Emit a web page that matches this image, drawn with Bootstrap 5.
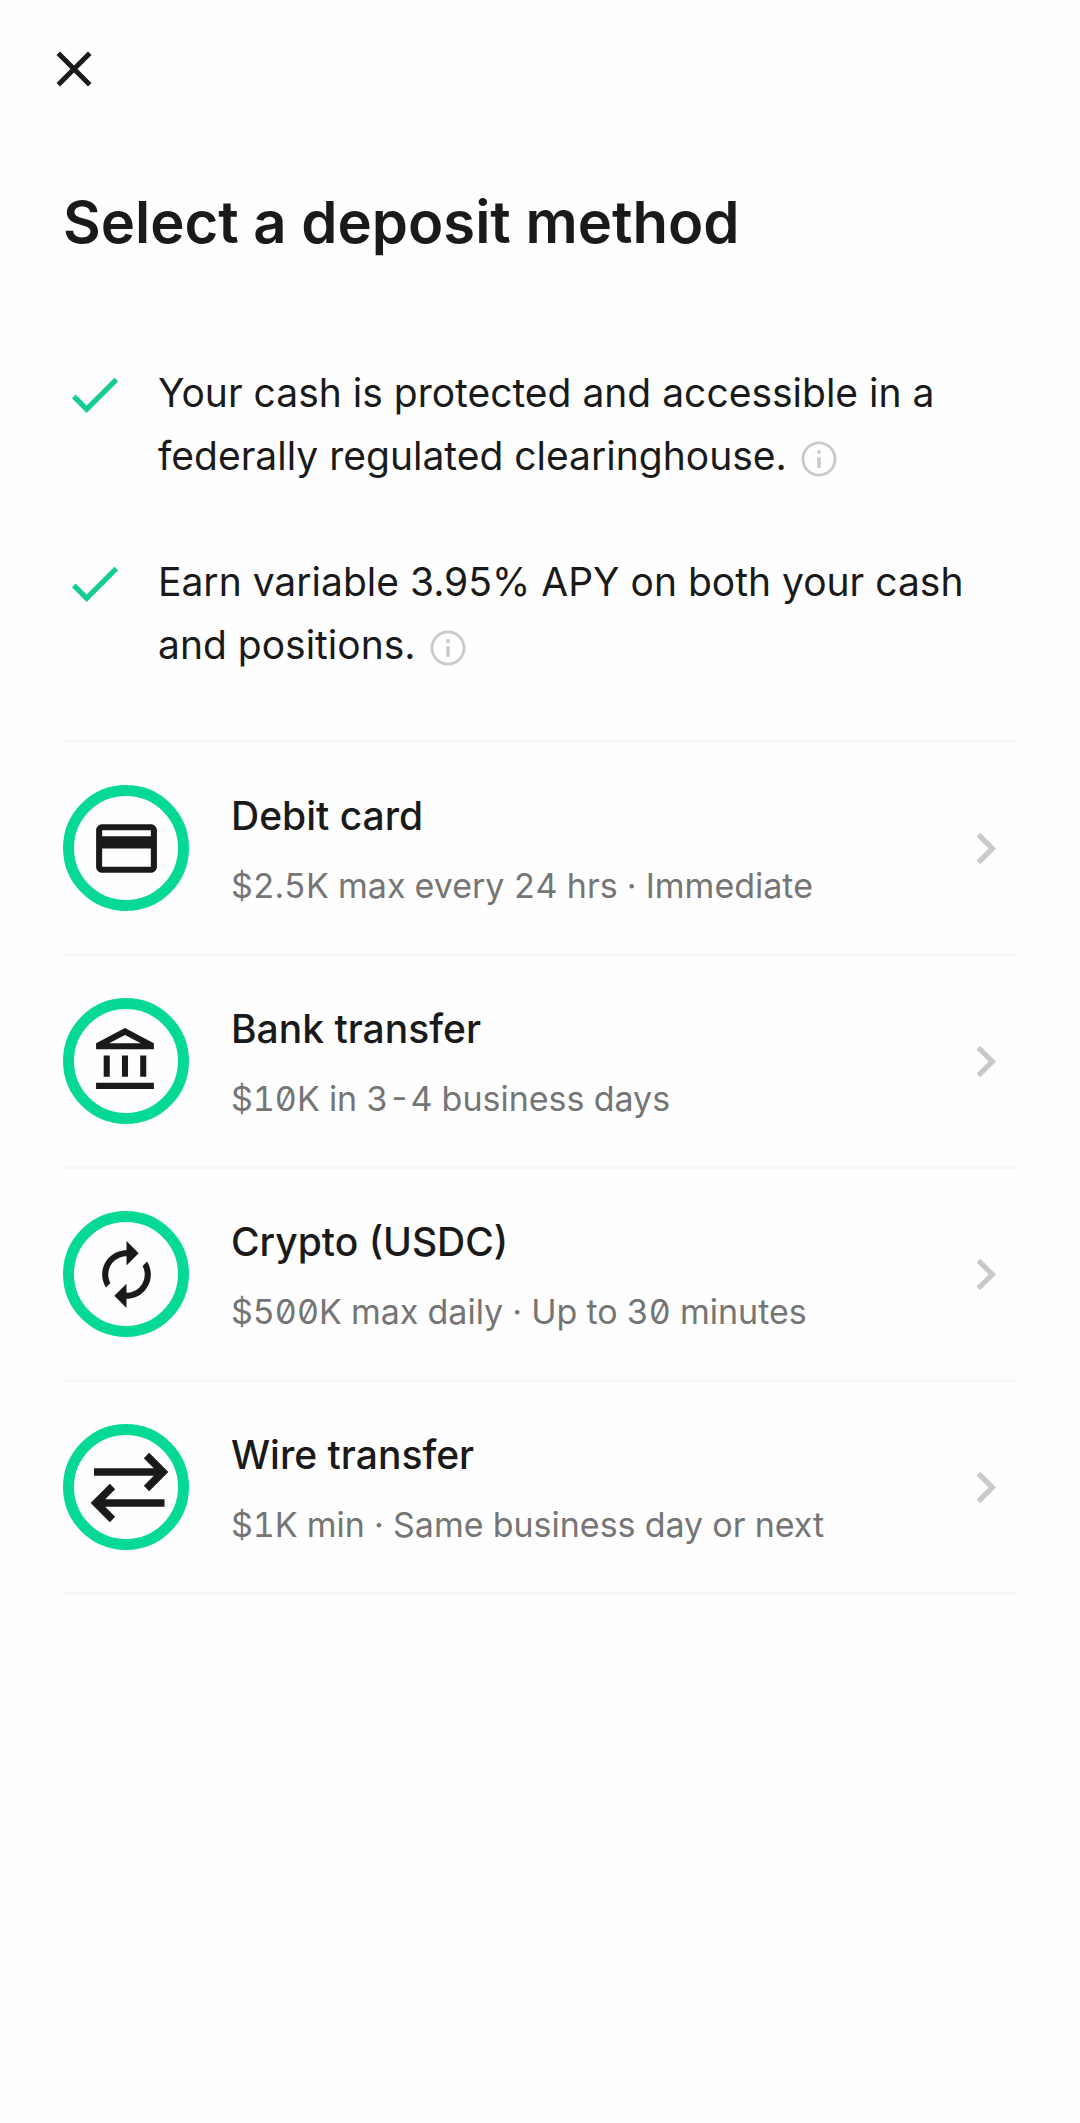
<!DOCTYPE html>
<html lang="en">
<head>
<meta charset="utf-8">
<meta name="viewport" content="width=device-width, initial-scale=1">
<title>Select a deposit method</title>
<link href="https://cdn.jsdelivr.net/npm/bootstrap@5.3.0/dist/css/bootstrap.min.css" rel="stylesheet">
<style>
  :root { --ink: #1a1a1a; --quiet: #757575; --faint: #c9c9c9; --rule: #f7f7f7; --mint: #06d995; }
  body { font-family: Inter, "Liberation Sans", sans-serif; color: var(--ink); background: #fefefe; font-size: 39px; line-height: 63px; }
  svg { display: block; fill: currentColor; }
  .top-bar { padding: 39px 44px 0; }
  .top-bar .btn { color: var(--ink); }
  .sheet { padding: 89px 63px 63px; }
  .sheet-title { font-size: 58px; line-height: 68px; font-weight: 600; margin-bottom: 105px; }
  .perks { gap: 63px; margin-bottom: 64px; }
  .perk { gap: 32px; }
  .perk-tick { color: #14cc91; margin-top: 2px; }
  .info-btn { color: var(--faint); line-height: 0; vertical-align: -10px; }
  .methods { border-top: 3px solid var(--rule); }
  .method { gap: 42px; padding: 42px 0; border-bottom: 3px solid var(--rule); color: var(--ink); }
  .ring { width: 126px; height: 126px; border: 11px solid var(--mint); }
  .method-text { gap: 14px; }
  .method-name { font-weight: 500; line-height: 62px; }
  .method-note { font-size: 34px; line-height: 50px; color: var(--quiet); font-feature-settings: "zero", "tnum"; }
  .method-go { color: var(--faint); }
</style>
<script src="https://cdn.jsdelivr.net/npm/bootstrap@5.3.0/dist/js/bootstrap.bundle.min.js" defer></script>
</head>
<body>
<header class="top-bar d-flex">
  <button type="button" class="btn p-0 border-0" aria-label="Close">
    <svg width="60" height="60" viewBox="0 0 24 24"><path d="M19 6.41 17.59 5 12 10.59 6.41 5 5 6.41 10.59 12 5 17.59 6.41 19 12 13.41 17.59 19 19 17.59 13.41 12z"/></svg>
  </button>
</header>
<main class="sheet">
  <h1 class="sheet-title">Select a deposit method</h1>

  <ul class="perks list-unstyled d-flex flex-column">
    <li class="perk d-flex align-items-start">
      <svg class="perk-tick flex-shrink-0" width="63" height="63" viewBox="0 0 24 24" aria-hidden="true"><path d="M9 16.17 4.83 12l-1.42 1.41L9 19 21 7l-1.41-1.41z"/></svg>
      <div>Your cash is protected and accessible in a federally regulated clearinghouse.
        <button type="button" class="info-btn btn p-0 border-0" aria-label="About cash protection"><svg width="42" height="42" viewBox="0 0 24 24"><path d="M11 7h2v2h-2zm0 4h2v6h-2zm1-9C6.48 2 2 6.48 2 12s4.48 10 10 10 10-4.480 10-10S17.520 2 12 2zm0 18.400c-4.640 0-8.400-3.760-8.400-8.400S7.360 3.600 12 3.600s8.400 3.760 8.400 8.400-3.760 8.400-8.400 8.400z"/></svg></button></div>
    </li>
    <li class="perk d-flex align-items-start">
      <svg class="perk-tick flex-shrink-0" width="63" height="63" viewBox="0 0 24 24" aria-hidden="true"><path d="M9 16.17 4.83 12l-1.42 1.41L9 19 21 7l-1.41-1.41z"/></svg>
      <div>Earn variable 3.95% APY on both your cash and positions.
        <button type="button" class="info-btn btn p-0 border-0" aria-label="About APY"><svg width="42" height="42" viewBox="0 0 24 24"><path d="M11 7h2v2h-2zm0 4h2v6h-2zm1-9C6.48 2 2 6.48 2 12s4.48 10 10 10 10-4.480 10-10S17.520 2 12 2zm0 18.400c-4.640 0-8.400-3.760-8.400-8.400S7.360 3.600 12 3.600s8.400 3.760 8.400 8.400-3.760 8.400-8.400 8.400z"/></svg></button></div>
    </li>
  </ul>

  <nav class="methods" aria-label="Deposit methods">
    <a href="#debit" class="method d-flex align-items-center text-decoration-none">
      <span class="ring rounded-circle d-flex align-items-center justify-content-center flex-shrink-0">
        <svg width="73" height="73" viewBox="0 0 24 24" aria-hidden="true"><path d="M20 4H4c-1.110 0-1.990.89-1.990 2L2 18c0 1.110.89 2 2 2h16c1.110 0 2-.89 2-2V6c0-1.110-.89-2-2-2zm0 14H4v-6h16v6zm0-10H4V6h16v2z"/></svg>
      </span>
      <span class="method-text d-flex flex-column flex-grow-1">
        <span class="method-name">Debit card</span>
        <span class="method-note">$2.5K max every 24 hrs · Immediate</span>
      </span>
      <svg class="method-go flex-shrink-0" width="63" height="63" viewBox="0 0 24 24" aria-hidden="true"><path d="M10 6 8.590 7.410 13.170 12l-4.580 4.590L10 18l6-6z"/></svg>
    </a>
    <a href="#bank" class="method d-flex align-items-center text-decoration-none">
      <span class="ring rounded-circle d-flex align-items-center justify-content-center flex-shrink-0">
        <svg width="73" height="73" viewBox="0 0 24 24" aria-hidden="true"><path d="M6.500 10h-2v7h2v-7zm6 0h-2v7h2v-7zm8.500 9H2v2h19v-2zm-2.500-9h-2v7h2v-7zm-7-6.740L16.710 6H6.290l5.210-2.740m0-2.260L2 6v2h19V6l-9.500-5z"/></svg>
      </span>
      <span class="method-text d-flex flex-column flex-grow-1">
        <span class="method-name">Bank transfer</span>
        <span class="method-note">$10K in 3-4 business days</span>
      </span>
      <svg class="method-go flex-shrink-0" width="63" height="63" viewBox="0 0 24 24" aria-hidden="true"><path d="M10 6 8.590 7.410 13.170 12l-4.580 4.590L10 18l6-6z"/></svg>
    </a>
    <a href="#crypto" class="method d-flex align-items-center text-decoration-none">
      <span class="ring rounded-circle d-flex align-items-center justify-content-center flex-shrink-0">
        <svg width="73" height="73" viewBox="0 0 24 24" aria-hidden="true"><path d="M12 6v3l4-4-4-4v3c-4.420 0-8 3.580-8 8 0 1.570.46 3.030 1.240 4.260L6.700 14.800c-.45-.83-.7-1.790-.7-2.800 0-3.310 2.690-6 6-6zm6.760 1.740L17.300 9.200c.44.84.7 1.790.7 2.800 0 3.310-2.690 6-6 6v-3l-4 4 4 4v-3c4.420 0 8-3.580 8-8 0-1.570-.46-3.030-1.240-4.260z"/></svg>
      </span>
      <span class="method-text d-flex flex-column flex-grow-1">
        <span class="method-name">Crypto (USDC)</span>
        <span class="method-note">$500K max daily · Up to 30 minutes</span>
      </span>
      <svg class="method-go flex-shrink-0" width="63" height="63" viewBox="0 0 24 24" aria-hidden="true"><path d="M10 6 8.590 7.410 13.170 12l-4.580 4.590L10 18l6-6z"/></svg>
    </a>
    <a href="#wire" class="method d-flex align-items-center text-decoration-none">
      <span class="ring rounded-circle d-flex align-items-center justify-content-center flex-shrink-0">
        <svg width="104" height="104" viewBox="11 11 104 104" aria-hidden="true"><path fill="none" stroke="currentColor" stroke-width="7.600" d="M31 48h68M83.500 31.500 100 48 83.500 64.500M101.500 79H35M49.500 62.500 33 79l16.500 16.500"/></svg>
      </span>
      <span class="method-text d-flex flex-column flex-grow-1">
        <span class="method-name">Wire transfer</span>
        <span class="method-note">$1K min · Same business day or next</span>
      </span>
      <svg class="method-go flex-shrink-0" width="63" height="63" viewBox="0 0 24 24" aria-hidden="true"><path d="M10 6 8.590 7.410 13.170 12l-4.580 4.590L10 18l6-6z"/></svg>
    </a>
  </nav>
</main>
</body>
</html>
